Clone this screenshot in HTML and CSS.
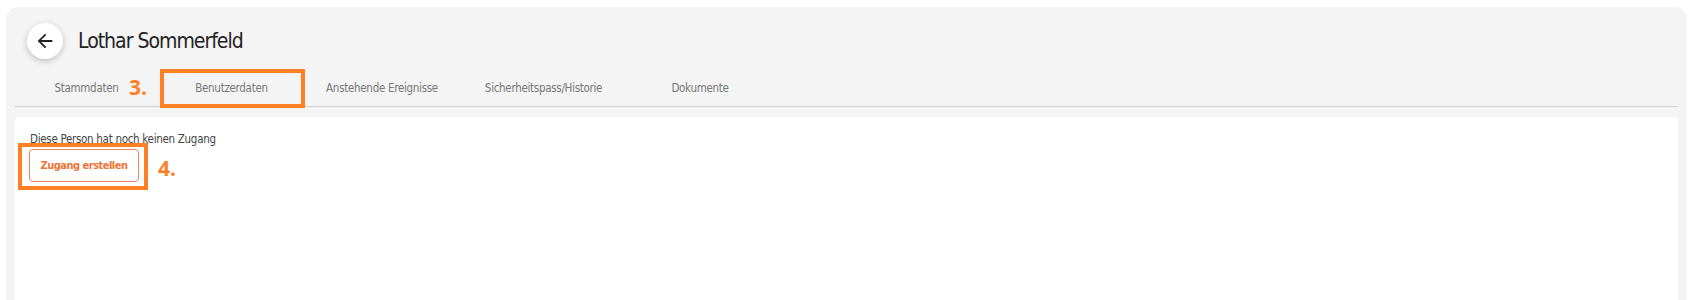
FILE: index.html
```html
<!DOCTYPE html>
<html lang="de">
<head>
<meta charset="utf-8">
<title>Lothar Sommerfeld</title>
<link rel="stylesheet" href="styles.css">
</head>
<body>
<div class="card">
  <header class="head">
    <button class="back" aria-label="Zurück">
      <svg width="22" height="22" viewBox="0 0 24 24"><path d="M20 11H7.83l5.59-5.59L12 4l-8 8 8 8 1.41-1.41L7.83 13H20v-2z" fill="#222"/></svg>
    </button>
    <h1 class="title">Lothar Sommerfeld</h1>
  </header>
  <nav class="tabs">
    <div class="tab">Stammdaten</div>
    <div class="tab">Benutzerdaten</div>
    <div class="tab">Anstehende Ereignisse</div>
    <div class="tab">Sicherheitspass/Historie</div>
    <div class="tab">Dokumente</div>
    <span class="mark mark-3">3.</span>
    <span class="hl hl-3"></span>
  </nav>
  <section class="panel">
    <p class="info">Diese Person hat noch keinen Zugang</p>
    <button class="create">Zugang erstellen</button>
    <span class="hl hl-4"></span>
    <span class="mark mark-4">4.</span>
  </section>
</div>
</body>
</html>
```

FILE: styles.css
```css
* { box-sizing: border-box; }
html, body { margin: 0; padding: 0; background: #fff; }
body {
  font-family: "DejaVu Sans Condensed", "Liberation Sans", sans-serif;
  height: 300px;
  overflow: hidden;
}
.card {
  margin: 7px 9px 0 6px;
  height: 293px;
  background: #f4f4f4;
  border-radius: 12px 12px 0 0;
  padding: 0 9px;
  overflow: hidden;
}
.head {
  display: flex;
  align-items: center;
  gap: 15px;
  padding: 12px 0 0 12px;
  height: 55px;
}
.back {
  width: 36px;
  height: 36px;
  border-radius: 50%;
  border: 0;
  background: #fff;
  box-shadow: 0 2px 6px rgba(0,0,0,0.22);
  display: flex;
  align-items: center;
  justify-content: center;
  padding: 0;
}
.title {
  margin: 0;
  font-size: 21px;
  font-weight: 400;
  color: #222;
  letter-spacing: -1px;
}
.tabs {
  position: relative;
  display: flex;
  margin-top: 7px;
  height: 38px;
  border-bottom: 1px solid #cfcfcf;
}
.tab {
  flex: 0 0 auto;
  width: 144px;
  display: flex;
  align-items: center;
  justify-content: center;
  white-space: nowrap;
  font-size: 11.5px;
  letter-spacing: -0.3px;
  color: #777;
}
.tab:nth-child(1) { width: 143px; }
.tab:nth-child(2) { width: 147px; }
.tab:nth-child(3) { width: 154px; }
.tab:nth-child(4) { width: 169px; }
.mark {
  position: absolute;
  font-family: "Open Sans", "Liberation Sans", sans-serif;
  font-weight: 700;
  color: #fd8024;
  font-size: 21px;
  line-height: 1;
}
.mark-3 { left: 114px; top: 8px; }
.hl {
  position: absolute;
  border: 4px solid #fd8024;
}
.hl-3 { left: 145px; top: 0; width: 145px; height: 39px; }
.panel {
  position: relative;
  margin-top: 10px;
  background: #fff;
  border-radius: 4px 4px 0 0;
  height: 200px;
  padding: 14px 14px 0 15px;
}
.info {
  margin: 0;
  font-size: 11.5px;
  line-height: 16px;
  letter-spacing: -0.3px;
  color: #444;
}
.create {
  margin-top: 2px;
  margin-left: -1px;
  width: 110px;
  height: 33px;
  border: 1px solid #e9865c;
  border-radius: 4px;
  background: #fff;
  color: #ef7436;
  font-family: "DejaVu Sans Condensed", "Liberation Sans", sans-serif;
  font-weight: 700;
  font-size: 11px;
  letter-spacing: -0.5px;
  white-space: nowrap;
  padding: 0;
}
.hl-4 { left: 3px; top: 26px; width: 130px; height: 47px; }
.mark-4 { left: 143px; top: 41px; }
```
